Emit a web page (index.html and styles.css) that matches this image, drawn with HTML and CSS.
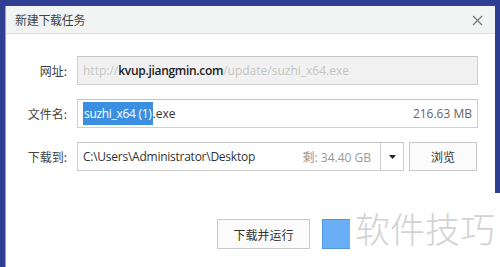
FILE: index.html
```html
<!DOCTYPE html>
<html>
<head>
<meta charset="utf-8">
<link rel="stylesheet" href="styles.css">
</head>
<body>
<div class="desktop">
  <div class="dialog">
    <div class="titlebar">
      <span class="title">新建下载任务</span>
      <svg class="close" width="11" height="11" viewBox="0 0 11 11"><path d="M1 1 L10 10 M10 1 L1 10" stroke="#7a7a7a" stroke-width="1.3"/></svg>
    </div>
    <div class="form">
      <label class="lbl">网址:</label>
      <div class="field disabled"><span class="dim">http://</span><span class="host">kvup.jiangmin.com</span><span class="dim">/update/suzhi_x64.exe</span></div>

      <label class="lbl">文件名:</label>
      <div class="field"><span class="sel">suzhi_x64 (1)</span><span>.exe</span><span class="size">216.63 MB</span></div>

      <label class="lbl">下载到:</label>
      <div class="pathrow">
        <div class="field combo">
          <span class="path">C:\Users\Administrator\Desktop</span>
          <span class="free">剩: 34.40 GB</span>
          <span class="drop"><svg width="7" height="4" viewBox="0 0 7 4"><path d="M0 0 H7 L3.5 4 Z" fill="#222"/></svg></span>
        </div>
        <button class="btn browse">浏览</button>
      </div>
    </div>
    <div class="actions">
      <button class="btn run">下载并运行</button>
      <button class="btn primary"></button>
    </div>
  </div>
  <div class="watermark">软件技巧</div>
</div>
</body>
</html>
```
FILE: styles.css
```css
* { box-sizing: border-box; }
html, body { margin: 0; padding: 0; }
body {
  width: 500px;
  height: 267px;
  overflow: hidden;
  font-family: "Noto Sans", "Noto Sans CJK SC", sans-serif;
  font-size: 12px;
  color: #333;
}
.desktop {
  position: relative;
  width: 500px;
  height: 267px;
  background: #2f3d92;
  padding: 6px 5px 0 5px;
}
.dialog {
  background: #fff;
  height: 261px;
  border-left: 1px solid #8aa0d8;
}
.titlebar {
  height: 28px;
  background: #f2f4f4;
  border-bottom: 1px solid #dcdede;
  display: flex;
  align-items: center;
  justify-content: space-between;
  padding: 0 12px 0 9px;
}
.title {
  font-family: "Noto Sans CJK SC", sans-serif;
  font-size: 12px;
  color: #444;
  letter-spacing: -0.3px;
}
.close { margin-top: 2px; }
.form {
  display: grid;
  grid-template-columns: 61px 1fr;
  column-gap: 10px;
  row-gap: 14px;
  padding: 22px 17px 0 0;
  align-items: center;
}
.lbl {
  text-align: right;
  font-family: "Noto Sans CJK SC", sans-serif;
  font-size: 12px;
  color: #444;
}
.field {
  height: 29px;
  border: 1px solid #cfcfcf;
  border-top-color: #c4c4c4;
  display: flex;
  align-items: center;
  padding: 0 5px;
  background: #fff;
  white-space: nowrap;
  overflow: hidden;
  font-family: "Open Sans", "Noto Sans CJK SC", sans-serif;
  font-size: 12px;
}
.field.disabled { background: #f1f1f1; }
.dim { color: #c4c4c4; }
.host { color: #222; font-weight: 600; letter-spacing: -0.3px; }
.sel {
  background: #3b8fe0;
  color: #fff;
  padding: 3px 1px;
  letter-spacing: -0.3px;
}
.size { margin-left: auto; color: #666; }
.pathrow {
  display: flex;
  gap: 5px;
}
.combo {
  width: 327px;
  padding-right: 0;
}
.path { color: #333; letter-spacing: -0.25px; }
.free { margin-left: auto; color: #999; margin-right: 9px; }
.drop {
  width: 23px;
  height: 100%;
  border-left: 1px solid #cfcfcf;
  display: flex;
  align-items: center;
  justify-content: center;
}
.btn {
  font-family: "Noto Sans CJK SC", sans-serif;
  font-size: 12px;
  color: #333;
  background: #fbfbfb;
  border: 1px solid #c9c9c9;
  padding: 0;
}
.browse { width: 68px; height: 29px; }
.actions {
  display: flex;
  gap: 12px;
  padding: 48px 0 0 211px;
}
.run { width: 93px; height: 30px; }
.primary {
  width: 93px;
  height: 30px;
  background: #6aaef5;
  border-color: #5496e0;
  color: #fff;
}
.watermark {
  position: absolute;
  left: 350px;
  top: 193px;
  width: 150px;
  height: 74px;
  background: #fff;
  font-family: "Noto Sans CJK SC", sans-serif;
  font-weight: 300;
  font-size: 35px;
  color: #d2d2d2;
  padding: 15px 0 0 5px;
  line-height: 40px;
}
```
